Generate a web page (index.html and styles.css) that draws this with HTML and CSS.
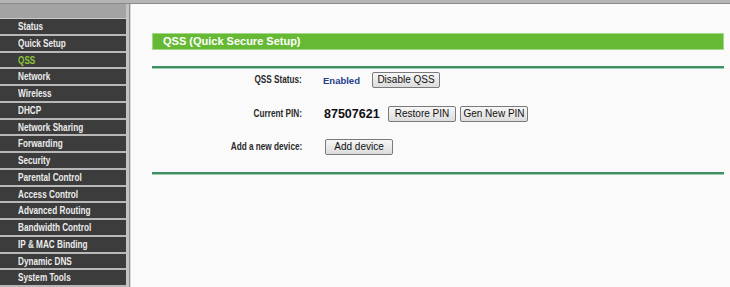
FILE: index.html
```html
<!DOCTYPE html>
<html lang="en">
<head>
<meta charset="UTF-8">
<title>QSS</title>
<link rel="stylesheet" href="styles.css">
</head>
<body>
<div class="topline"></div>
<div class="page">
    <div class="sidebar">
        <div class="side-head"></div>
        <ul class="menu">
            <li><span>Status</span></li>
            <li><span>Quick Setup</span></li>
            <li class="active"><span>QSS</span></li>
            <li><span>Network</span></li>
            <li><span>Wireless</span></li>
            <li><span>DHCP</span></li>
            <li><span>Network Sharing</span></li>
            <li><span>Forwarding</span></li>
            <li><span>Security</span></li>
            <li><span>Parental Control</span></li>
            <li><span>Access Control</span></li>
            <li><span>Advanced Routing</span></li>
            <li><span>Bandwidth Control</span></li>
            <li><span>IP &amp; MAC Binding</span></li>
            <li><span>Dynamic DNS</span></li>
            <li><span>System Tools</span></li>
        </ul>
    </div>
    <div class="main">
        <div class="title-bar">QSS (Quick Secure Setup)</div>
        <div class="rule"></div>
        <div class="form">
            <div class="label"><span>QSS Status:</span></div>
            <div class="value">
                <span class="enabled">Enabled</span>
                <button class="btn">Disable QSS</button>
            </div>

            <div class="label"><span>Current PIN:</span></div>
            <div class="value">
                <span class="pin">87507621</span>
                <button class="btn">Restore PIN</button>
                <button class="btn">Gen New PIN</button>
            </div>

            <div class="label"><span>Add a new device:</span></div>
            <div class="value">
                <button class="btn">Add device</button>
            </div>
        </div>
        <div class="rule bottom"></div>
    </div>
</div>
</body>
</html>
```
FILE: styles.css
```css
html, body {
    margin: 0;
    height: 100%;
    font-family: "Liberation Sans", Arial, sans-serif;
    background: #fafafa;
    overflow: hidden;
}
.topline {
    height: 3px;
    background: #b4b4b4;
    border-bottom: 1px solid #8c8c8c;
}
.page {
    display: flex;
    height: calc(100% - 4px);
}

/* menu de gauche */
.sidebar {
    width: 126px;
    background: #b9b9b9;
    border-right: 3px solid #c4c4c4;
    box-shadow: 1px 0 0 #8a8a8a, 2px 0 0 #d8d8d8;
    margin-right: 3px;
}
.side-head {
    height: 14px;
    background: #a3a3a3;
    border-bottom: 1px solid #c8c8c8;
}
.menu {
    list-style: none;
    margin: 0;
    padding: 0;
}
.menu li {
    height: 14.75px;
    line-height: 15px;
    background: #3c3c3c;
    border-bottom: 2px solid #b8b8b8;
    color: #ececec;
    font-size: 10px;
    font-weight: bold;
    padding-left: 18px;
    white-space: nowrap;
}
/* police étroite (pas de Arial Narrow ici) */
.menu li span {
    display: inline-block;
    transform: scaleX(0.82);
    transform-origin: left center;
}
.menu li.active {
    color: #8dc43f;
}

/* contenu */
.main {
    flex: 1;
    padding: 29px 6px 0 20px;
}
.title-bar {
    height: 15px;
    line-height: 15px;
    background: #66b933;
    border: 1px solid #a4d68a;
    color: #fff;
    font-size: 11px;
    font-weight: bold;
    padding-left: 10px;
}
.rule {
    height: 2px;
    background: #3f8f62;
    border-bottom: 1px solid #9fcbb0;
    margin-top: 16px;
}
.rule.bottom {
    margin-top: 17px;
}
.form {
    display: grid;
    grid-template-columns: 150px 1fr;
    column-gap: 21px;
    row-gap: 17.5px;
    padding-top: 3px;
}
.label {
    text-align: right;
    font-size: 10px;
    font-weight: bold;
    color: #2a2a2a;
    height: 16px;
    line-height: 16px;
    white-space: nowrap;
}
.label span {
    display: inline-block;
    transform: scaleX(0.82);
    transform-origin: right center;
}
.value {
    display: flex;
    align-items: center;
    height: 16px;
}
.enabled {
    color: #1f3e8c;
    font-size: 9.5px;
    font-weight: bold;
    width: 49px;
}
.pin {
    font-size: 12.5px;
    font-weight: bold;
    color: #111;
    margin-left: 1px;
    width: 64px;
}
.btn {
    font-family: "Liberation Sans", Arial, sans-serif;
    font-size: 10px;
    width: 68px;
    height: 16px;
    line-height: 12px;
    padding: 0;
    margin: 0 4px 0 0;
    color: #111;
    background: linear-gradient(#f6f6f6, #dcdcdc);
    border: 1px solid #7a7a7a;
    border-radius: 2px;
}
.value .btn:first-child {
    margin-left: 2px;
}
```
